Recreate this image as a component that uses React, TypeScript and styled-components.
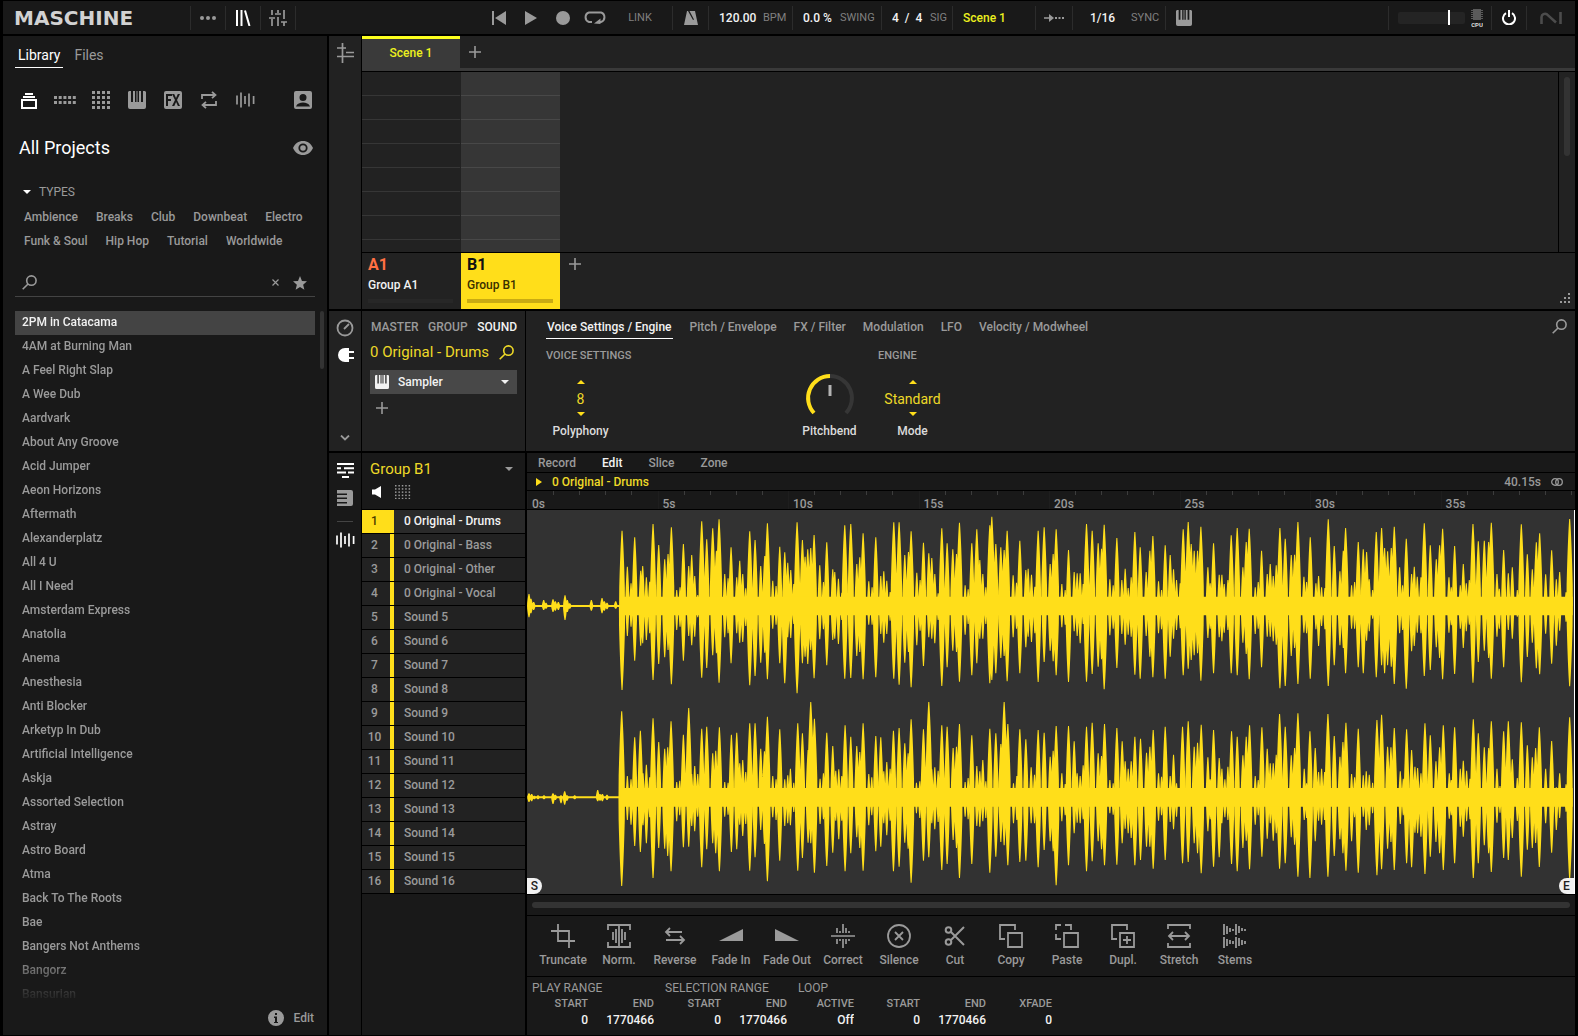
import React, { useState } from "react";
import styled, { createGlobalStyle, css } from "styled-components";

const color = {
  black: "#000",
  dark: "#191919",
  panel: "#222222",
  raised: "#3a3a3a",
  line: "#2c2c2c",
  text: "#9a9a9a",
  dim: "#747474",
  bright: "#f2f2f2",
  yellow: "#ffde1a",
  value: "#eed928",
  scene: "#ecf01e",
  orange: "#ff7043",
};

const GlobalStyle = createGlobalStyle`
  *, *::before, *::after { box-sizing: border-box; }
  html, body { margin: 0; background: ${color.black}; }
  body, button, input, select {
    font-family: Roboto, "Liberation Sans", sans-serif;
    font-size: 12px;
    font-weight: 500;
    line-height: 16px;
    color: ${color.text};
  }
  button, input, select { margin: 0; padding: 0; border: 0; background: none; border-radius: 0; outline: none; }
  button { cursor: pointer; }
  svg { display: block; flex: none; }
`;

/* ---------- frame ---------- */

const Frame = styled.div`
  display: flex;
  flex-direction: column;
  gap: 2px;
  min-height: 100vh;
  padding: 1px 3px;
  background: ${color.black};
`;

const Body = styled.div`
  display: grid;
  grid-template-columns: 324px minmax(0, 1fr);
  gap: 2px;
  flex: 1;
`;

const Workspace = styled.div`
  display: flex;
  flex-direction: column;
  gap: 2px;
  min-width: 0;
`;

const Column = styled.div<{ $gap?: number }>`
  display: flex;
  flex-direction: column;
  gap: ${(p) => p.$gap ?? 0}px;
  min-width: 0;
`;

const IconButton = styled.button<{ $w?: number; $h?: number; $on?: boolean; $bottom?: boolean }>`
  display: flex;
  align-items: center;
  justify-content: center;
  flex: none;
  width: ${(p) => p.$w ?? 36}px;
  height: ${(p) => p.$h ?? 24}px;
  margin-top: ${(p) => (p.$bottom ? "auto" : 0)};
  color: ${(p) => (p.$on ? "#fff" : color.text)};
`;

/* ---------- header ---------- */

const Header = styled.header`
  display: flex;
  justify-content: space-between;
  height: 33px;
  background: ${color.dark};
`;

const HeaderGroup = styled.div`
  display: flex;
  align-items: center;
`;

const Cell = styled.div<{ $w: number; $last?: boolean; $pad?: number }>`
  display: flex;
  align-items: center;
  justify-content: ${(p) => (p.$pad ? "flex-start" : "center")};
  gap: 6px;
  width: ${(p) => p.$w}px;
  height: 24px;
  padding-left: ${(p) => p.$pad ?? 0}px;
  border-right: ${(p) => (p.$last ? 0 : 1)}px solid ${color.line};
`;

const Logo = styled.h1`
  width: 187px;
  margin: 0;
  padding-left: 11px;
  font: 700 20px/24px "DejaVu Sans", sans-serif;
  color: #d2d2d2;
`;

const HeaderInput = styled.input<{ $w: number }>`
  width: ${(p) => p.$w}px;
  color: ${color.bright};
`;

const Unit = styled.label`
  font-size: 11px;
  font-weight: 400;
  color: #808080;
`;

const LinkButton = styled.button`
  width: 58px;
  font-size: 11px;
  font-weight: 400;
  color: #808080;
`;

const SceneButton = styled.button`
  flex: 1;
  padding-left: 10px;
  text-align: left;
  color: ${color.scene};
`;

const GridSelect = styled.select`
  appearance: none;
  width: 35px;
  color: ${color.bright};
`;

const Meter = styled.div`
  position: relative;
  width: 67px;
  height: 12px;
  margin: 0 6px 0 9px;
  background: #242424;
  border-radius: 2px;
`;

const MeterHandle = styled.span`
  position: absolute;
  top: -2px;
  left: 50px;
  width: 2px;
  height: 15px;
  background: #fff;
`;

/* ---------- library ---------- */

const Library = styled.aside`
  display: flex;
  flex-direction: column;
  background: ${color.dark};
`;

const LibraryTabs = styled.nav`
  display: flex;
  gap: 8px;
  padding: 9px 0 0 12px;
`;

const LibraryTab = styled.button<{ $on?: boolean }>`
  padding: 0 3px 2px;
  height: 23px;
  font-size: 14px;
  font-weight: 400;
  color: ${(p) => (p.$on ? "#fff" : color.text)};
  border-bottom: 1px solid ${(p) => (p.$on ? "#fff" : "transparent")};
`;

const Categories = styled.div`
  display: flex;
  padding: 20px 6px 0 8px;
`;

const Push = styled.span`
  margin-left: auto;
`;

const TitleRow = styled.div`
  display: flex;
  justify-content: space-between;
  align-items: center;
  padding: 24px 6px 0 16px;
`;

const Title = styled.h2`
  margin: 0;
  font-size: 18px;
  line-height: 24px;
  font-weight: 400;
  color: #fff;
`;

const TypesHeading = styled.button`
  display: flex;
  align-items: center;
  gap: 8px;
  margin: 24px 0 0 20px;
  font-weight: 400;
`;

const Tags = styled.div`
  display: flex;
  flex-wrap: wrap;
  gap: 8px 18px;
  padding: 9px 8px 0 21px;
`;

const SearchBar = styled.div`
  display: flex;
  align-items: center;
  height: 32px;
  margin: 16px 12px 0;
  padding: 4px 2px 0 7px;
  border-bottom: 1px solid #444;
  color: ${color.text};
`;

const SearchInput = styled.input`
  flex: 1;
  min-width: 0;
  margin-left: 8px;
`;

const Results = styled.div`
  display: flex;
  justify-content: space-between;
  flex: 1;
  padding: 14px 3px 0 12px;
`;

const ResultList = styled.ul`
  width: 300px;
  margin: 0;
  padding: 0;
  list-style: none;
  mask-image: linear-gradient(to top, transparent, transparent 4px, #000 52px);
`;

const Result = styled.button<{ $on?: boolean }>`
  display: block;
  width: 100%;
  height: 24px;
  padding: 0 0 2px 7px;
  text-align: left;
  color: ${(p) => (p.$on ? color.bright : color.text)};
  background: ${(p) => (p.$on ? "#444" : "transparent")};
`;

const ScrollThumb = styled.div<{ $w: number; $h: number }>`
  width: ${(p) => p.$w}px;
  height: ${(p) => p.$h}px;
  border-radius: 3px;
  background: #333;
`;

const LibraryFooter = styled.footer`
  display: flex;
  align-items: center;
  justify-content: flex-end;
  gap: 10px;
  padding: 0 13px 6px;
  height: 28px;
`;

/* ---------- arranger ---------- */

const Band = styled.section<{ $cols: string; $grow?: boolean }>`
  display: grid;
  grid-template-columns: ${(p) => p.$cols};
  gap: 1px;
  flex: ${(p) => (p.$grow ? 1 : "none")};
`;

const Strip = styled.div<{ $top: number; $dark?: boolean }>`
  display: flex;
  flex-direction: column;
  align-items: center;
  padding-top: ${(p) => p.$top}px;
  background: ${(p) => (p.$dark ? color.dark : color.panel)};
`;

const StripLine = styled.hr`
  width: 16px;
  margin: 7px 0 6px;
  border: 0;
  border-top: 1px solid #444;
`;

const SceneBar = styled.div`
  display: flex;
  height: 35px;
  background: ${color.panel};
`;

const SceneTab = styled.button`
  width: 98px;
  padding-bottom: 4px;
  background: ${color.raised};
  border-top: 3px solid #fdff1e;
  color: ${color.scene};
`;

const SceneRest = styled.div`
  flex: 1;
  display: flex;
  align-items: center;
  border-bottom: 3px solid ${color.raised};
`;

const ClipArea = styled.div`
  display: grid;
  grid-template-columns: 98px 99px minmax(0, 1fr) 17px;
  column-gap: 1px;
  height: 180px;
  background: ${color.panel};
`;

const ClipColumn = styled.div<{ $on?: boolean }>`
  background: repeating-linear-gradient(
    to bottom,
    transparent 0 23px,
    ${(p) => (p.$on ? "#484848" : "#363636")} 23px 24px
  ) ${(p) => (p.$on ? "#363636" : color.panel)};
`;

const ClipScroll = styled.div`
  padding: 5px 0 0 5px;
  border-left: 1px solid ${color.black};
`;

const GroupBar = styled.div`
  display: grid;
  grid-template-columns: 98px 99px minmax(0, 1fr);
  column-gap: 1px;
  height: 56px;
  background: ${color.panel};
`;

const GroupCard = styled.button<{ $on?: boolean }>`
  display: flex;
  flex-direction: column;
  align-items: stretch;
  gap: 2px;
  padding: 2px 7px 6px 6px;
  text-align: left;
  background: ${(p) => (p.$on ? color.yellow : color.panel)};
  color: ${(p) => (p.$on ? "#3a3000" : color.bright)};
`;

const GroupKey = styled.strong<{ $on?: boolean }>`
  font-size: 16px;
  line-height: 20px;
  font-weight: 700;
  color: ${(p) => (p.$on ? "#111" : color.orange)};
`;

const GroupLevel = styled.span<{ $on?: boolean }>`
  height: 4px;
  margin-top: auto;
  background: ${(p) => (p.$on ? "#c9ab12" : "#272727")};
`;

const GroupRest = styled.div`
  display: flex;
  justify-content: space-between;
  align-items: flex-start;
`;

const ResizeCorner = styled.span`
  align-self: flex-end;
  padding: 0 5px 6px 0;
`;

/* ---------- sound + plug-in ---------- */

const SoundPanel = styled.div`
  display: flex;
  flex-direction: column;
  padding: 8px 8px 0;
  background: ${color.panel};
`;

const LevelTabs = styled.div`
  display: flex;
  justify-content: space-between;
  padding-left: 1px;
`;

const PlainTab = styled.button<{ $on?: boolean }>`
  color: ${(p) => (p.$on ? color.bright : color.text)};
`;

const NameRow = styled.div`
  display: flex;
  align-items: center;
  justify-content: space-between;
  height: 20px;
  margin-top: 7px;
  padding-right: 3px;
  color: ${color.value};
`;

const BigName = styled.span`
  font-size: 15px;
  line-height: 20px;
  font-weight: 400;
  color: ${color.value};
`;

const SlotBox = styled.label`
  display: flex;
  align-items: center;
  gap: 9px;
  height: 24px;
  margin-top: 8px;
  padding: 0 8px 0 5px;
  background: #484848;
  color: ${color.bright};
`;

const SlotSelect = styled.select`
  flex: 1;
  appearance: none;
  color: ${color.bright};
`;

const PluginPanel = styled.div`
  padding: 8px 8px 0 13px;
  height: 140px;
  background: ${color.panel};
`;

const PluginTabs = styled.nav`
  display: flex;
  align-items: flex-start;
  gap: 17px;
  padding-left: 7px;
`;

const PluginTab = styled.button<{ $on?: boolean }>`
  height: 20px;
  padding: 0 0 4px;
  white-space: nowrap;
  color: ${(p) => (p.$on ? color.bright : color.text)};
  border-bottom: 1px solid ${(p) => (p.$on ? "#fff" : "transparent")};

  &:first-child { padding: 0 1px 4px; }
`;

const Params = styled.div`
  display: grid;
  grid-template-columns: repeat(5, 83px);
  padding-top: 9px;
`;

const ParamHeading = styled.h3`
  margin: 0 0 10px;
  padding-left: 7px;
  height: 16px;
  font-size: 11px;
  font-weight: 500;
  white-space: nowrap;
`;

const Param = styled.div`
  display: flex;
  flex-direction: column;
  align-items: center;
  color: ${color.value};
`;

const ParamBody = styled.div`
  display: flex;
  flex-direction: column;
  align-items: center;
  justify-content: center;
  height: 48px;
`;

const ParamValue = styled.input`
  width: 80px;
  height: 26px;
  padding-top: 2px;
  text-align: center;
  font-size: 14px;
  font-weight: 400;
  color: ${color.value};
`;

const StepButton = styled.button`
  display: flex;
  justify-content: center;
  width: 20px;
  padding: 1px 0;
  color: ${color.yellow};
`;

const ParamLabel = styled.label`
  margin-top: 1px;
  color: #dcdcdc;
`;

/* ---------- group + sounds ---------- */

const GroupHead = styled.div`
  height: 56px;
  padding: 6px 12px 0 8px;
  background: ${color.dark};
`;

const GroupSelectRow = styled.label`
  display: flex;
  align-items: center;
  height: 20px;
  color: ${color.text};
`;

const GroupSelect = styled.select`
  flex: 1;
  appearance: none;
  font-size: 15px;
  line-height: 20px;
  font-weight: 400;
  color: ${color.value};
`;

const GroupTools = styled.div`
  display: flex;
  align-items: center;
  gap: 13px;
  padding: 6px 0 0 2px;
`;

const SoundList = styled.ol`
  margin: 0;
  padding: 0;
  list-style: none;
  border-top: 1px solid ${color.black};
`;

const SoundFill = styled.div`
  flex: 1;
  background: ${color.dark};
`;

const SoundRow = styled.button<{ $on?: boolean }>`
  display: grid;
  grid-template-columns: 32px 1fr;
  width: 100%;
  height: 24px;
  border-bottom: 1px solid ${color.black};
  background: ${(p) => (p.$on ? "#2a2a2a" : color.panel)};
  color: ${(p) => (p.$on ? color.bright : color.text)};
  text-align: left;
  line-height: 23px;
`;

const SoundNumber = styled.span<{ $on?: boolean }>`
  padding-right: 3px;
  text-align: center;
  border-right: 4px solid ${color.yellow};
  ${(p) =>
    p.$on &&
    css`
      background: ${color.yellow};
      color: #4a3c00;
    `}
`;

const SoundName = styled.span`
  padding-left: 10px;
`;

/* ---------- sample editor ---------- */

const Editor = styled.div`
  display: flex;
  flex-direction: column;
  gap: 1px;
  min-width: 0;
  padding-left: 1px;
`;

const Bar = styled.div<{ $h: number }>`
  display: flex;
  align-items: center;
  height: ${(p) => p.$h}px;
  background: ${color.dark};
`;

const EditorTab = styled.button<{ $on?: boolean }>`
  margin: 0 15px 0 11px;
  color: ${(p) => (p.$on ? color.bright : color.text)};
`;

const SampleName = styled.span`
  padding-left: 10px;
  color: ${color.value};
`;

const Duration = styled.span`
  margin: 0 10px 0 auto;
`;

const Ruler = styled.div`
  display: grid;
  grid-template-columns: repeat(8, 500fr) 15fr;
  height: 18px;
  background: ${color.dark};
`;

const RulerSpan = styled.div`
  display: grid;
  grid-template-columns: repeat(5, 1fr);
`;

const Tick = styled.span<{ $major?: boolean }>`
  height: ${(p) => (p.$major ? 18 : 4)}px;
  padding: ${(p) => (p.$major ? "5px 0 0 4px" : 0)};
  border-left: 1px solid ${(p) => (p.$major ? "#1e1e1e" : "#3c3c3c")};
`;

const Wave = styled.div`
  position: relative;
  height: 384px;
  background: #323232;
  border-right: 1px solid #fff;
`;

const Marker = styled.span<{ $end?: boolean }>`
  position: absolute;
  bottom: 0;
  ${(p) => (p.$end ? "right: 0" : "left: 0")};
  width: 15px;
  height: 16px;
  text-align: center;
  color: #222;
  background: #f2f2f2;
  border-radius: ${(p) => (p.$end ? "8px 0 0 8px" : "0 8px 8px 0")};
`;

const ScrollLane = styled.div`
  flex: 1;
  height: 6px;
  margin: 0 5px;
  border-radius: 3px;
  background: #333;
`;

const ToolBar = styled.div`
  display: flex;
  height: 60px;
  padding: 8px 0 0 8px;
  background: ${color.dark};
`;

const Tool = styled.button`
  display: flex;
  flex-direction: column;
  align-items: center;
  gap: 4px;
  width: 56px;
  height: 44px;
  white-space: nowrap;
`;

const RangeBar = styled.div`
  display: flex;
  flex: 1;
  gap: 11px;
  padding: 3px 5px 6px;
  background: ${color.dark};
`;

const RangeGroup = styled.fieldset`
  margin: 0;
  padding: 0;
  border: 0;
`;

const RangeLegend = styled.legend`
  padding: 0;
  font-weight: 400;
`;

const RangeFields = styled.div`
  display: flex;
`;

const RangeField = styled.label<{ $first?: boolean }>`
  display: flex;
  flex-direction: column;
  width: ${(p) => (p.$first ? 56 : 66)}px;
  font-size: 11px;
  text-align: right;
`;

const RangeInput = styled.input`
  width: 100%;
  text-align: right;
  color: ${color.bright};
`;

/* ---------- icons ---------- */

type IconProps = { w?: number; h?: number; box?: string; children: React.ReactNode; line?: number };

const Icon = ({ w = 18, h = w, box, children, line }: IconProps) => (
  <svg
    width={w}
    height={h}
    viewBox={box ?? `0 0 ${w} ${h}`}
    fill={line ? "none" : "currentColor"}
    stroke={line ? "currentColor" : "none"}
    strokeWidth={line}
    aria-hidden="true"
  >
    {children}
  </svg>
);

const dots = (cols: number, rows: number, dx: number, dy: number, size: number) =>
  Array.from({ length: cols * rows }, (_, i) => (
    <rect key={i} x={(i % cols) * dx} y={Math.floor(i / cols) * dy} width={size} height={size} />
  ));

const Plus = () => <Icon w={12} line={1.6}><path d="M6 0v12M0 6h12" /></Icon>;
const Down = () => <Icon w={8} h={4}><path d="M0 0h8L4 4z" /></Icon>;
const Up = () => <Icon w={8} h={4}><path d="M0 4h8L4 0z" /></Icon>;
const Magnifier = ({ w = 15 }: { w?: number }) => (
  <Icon w={w} box="0 0 15 15" line={1.6}>
    <circle cx="9.4" cy="5.6" r="4.7" />
    <path d="M6 9 .7 14.3" />
  </Icon>
);
const Keys = ({ w = 18 }: { w?: number }) => (
  <Icon w={w} box="0 0 18 18">
    <path d="M1 0h2v11h2V0h2v11h1.500V0h1v11H11V0h2v11h2V0h2l1 1v15a2 2 0 0 1-2 2H2a2 2 0 0 1-2-2V1z" />
  </Icon>
);
const Bars = () => (
  <Icon w={19} h={16} line={1.7}>
    <path d="M1 3.5v9M5 .5v15M9 4v8M13 1.5v13M17.6 4v8" />
  </Icon>
);

const categoryIcons: [string, React.ReactNode][] = [
  ["Projects", <Icon w={16} h={17}><path d="M4 1h8v2H4zM2 4h12v2H2zM0 7h16v10H0zm2 2v6h12V9z" fillRule="evenodd" /></Icon>],
  ["Groups", <Icon w={22} h={8}>{dots(5, 2, 4.7, 5, 3)}</Icon>],
  ["Kits", <Icon w={18} h={18}>{dots(4, 4, 5, 5, 3)}</Icon>],
  ["Instruments", <Keys />],
  [
    "Effects",
    <Icon w={18}>
      <path
        fillRule="evenodd"
        d="M2 0h14a2 2 0 0 1 2 2v14a2 2 0 0 1-2 2H2a2 2 0 0 1-2-2V2a2 2 0 0 1 2-2zm0 3v12h2v-5h3V8H4V5h4V3zm6 0 3 6-3 6h2.300l1.800-4 1.800 4H16l-3-6 3-6h-2.200L12 7l-1.800-4z"
      />
    </Icon>,
  ],
  [
    "Loops",
    <Icon w={18} line={1.8}>
      <path d="M2 8V4h13M12 .8 15.500 4 12 7.200M16 10v4H3M6 17.200 2.500 14 6 10.800" />
    </Icon>,
  ],
  ["One-shots", <Bars />],
];

/* ---------- waveform data: x, top edge, bottom edge ---------- */

const LEFT = `28 282 352,34 296 340,42 306 330,72 300 330,79 308 326,100 298 336,107 304 332,116 306 330,136 286 360,143 300 336,150 310 326,215 300 332,247 294 340,254 304 332,262 308 328,288 304 326,
307 92 570,323 200 408,334 250 380,345 112 482,363 212 437,369 198 430,380 232 420,390 245 400,400 72 540,417 135 492,435 178 472,445 162 450,455 82 553,471 270 390,481 262 380,491 132 482,507 198 408,516 165 436,525 228 410,534 285 352,546 64 533,561 118 504,579 85 466,590 152 460,598 58 548,615 222 412,625 235 400,634 142 490,651 232 400,660 182 428,669 222 426,678 265 378,690 94 556,706 120 528,723 198 488,735 168 458,743 70 538,759 242 386,769 258 374,780 140 490,795 157 550,804 188 412,813 210 414,822 252 372,832 67 580,848 120 490,856 170 470,864 148 492,873 144 450,883 105 535,900 196 418,911 246 388,921 127 496,939 208 420,945 216 416,956 236 432,966 278 360,975 76 536,993 72 534,1011 192 468,1020 172 456,1030 100 538,1047 244 374,1057 262 374,1068 112 532,1083 228 402,1092 214 428,1101 242 402,1111 276 362,1122 67 536,1138 67 554,1155 165 488,1166 156 456,1174 94 562,1191 218 436,1201 240 392,1211 128 498,1227 160 412,1236 174 416,1245 222 430,1255 280 360,1266 85 558,1282 130 502,1299 148 452,1310 162 456,1319 68 545,1336 256 404,1345 268 372,1356 130 526,1371 88 490,1380 180 416,1389 222 416,1398 262 372,1410 76 550,1416 50 540,1428 132 520,1443 142 474,1453 150 468,1462 92 544,1480 226 412,1490 248 386,
1500 122 520,1518 210 442,1525 206 410,1535 224 426,1545 260 400,1555 92 546,1573 82 486,1591 192 452,1600 162 484,1609 88 526,1626 252 382,1636 270 374,1646 150 546,1663 216 394,1672 220 408,1681 220 430,1690 252 372,1700 72 545,1717 92 522,1735 130 500,1745 146 478,1753 74 568,1770 238 406,1780 256 386,1791 114 504,1806 240 402,1816 206 434,1825 264 404,1834 232 410,1845 96 524,1861 142 536,1879 216 408,1890 152 470,1899 108 532,1916 244 400,1925 270 388,1936 136 536,1951 165 470,1961 208 416,1970 240 390,1981 250 385,1990 88 526,2005 66 506,2014 132 480,2023 152 466,2033 152 460,2043 80 542,2064 202 414,2071 250 386,2081 130 520,2098 224 412,2106 224 424,2113 252 398,2124 240 390,2134 106 520,2152 84 526,2169 202 428,2179 126 462,2188 86 538,2206 262 402,2215 246 386,2225 152 502,2242 222 410,2251 192 410,2260 228 424,2269 196 434,2280 84 565,2296 116 558,2314 165 468,2324 164 444,2334 66 552,2352 230 398,2360 246 400,2371 112 536,2388 250 388,2396 228 438,2405 262 378,2415 264 388,2425 58 558,2443 138 496,2460 214 436,2470 152 444,2477 84 520,2495 256 386,2504 246 386,2515 126 502,2530 148 520,2540 156 422,2548 238 394,2558 270 356,2569 96 532,2585 84 496,2594 144 520,2603 154 496,2614 144 500,2623 80 552,2639 202 400,2648 256 390,2659 116 566,2675 222 454,2683 200 438,2692 230 398,2703 232 400,2713 70 528,2731 136 510,2749 178 442,2759 136 474,2768 86 538,2787 232 398,2794 262 376,2804 138 522,2821 256 386,2830 192 444,2839 250 394,2848 240 374,2859 72 548,2875 124 486,2893 122 452,2906 126 474,2914 68 536,2931 222 410,2938 266 386,2951 150 502,2965 220 390,
2977 202 416,2992 270 350,3004 73 547,3022 163 471,3037 208 428,3049 127 505,3059 100 523,3077 223 401,3095 151 491,3109 238 437,3119 216 392,3138 277 365,3149 57 559`;

const RIGHT = `28 880 906,36 882 904,44 887 898,55 886 898,73 886 898,100 880 912,107 884 900,124 886 910,135 874 914,142 886 902,165 886 898,234 870 904,241 882 902,248 882 904,262 884 900,
306 634 1158,323 828 960,334 838 974,345 712 1038,362 692 1056,370 820 976,380 794 1030,390 832 952,400 655 1134,417 726 1044,435 746 1046,444 742 1068,454 664 1114,471 846 964,480 842 946,491 704 1042,507 624 1040,516 822 978,525 798 994,534 822 950,546 686 1102,561 680 1048,579 760 1030,588 752 1060,599 682 1114,615 846 950,625 848 944,635 704 1056,651 698 1048,660 790 974,669 780 1008,678 816 972,690 670 1112,706 670 1072,723 746 990,734 754 1032,743 650 1144,759 828 952,769 838 960,780 688 1082,795 838 978,804 826 970,812 806 976,822 848 936,834 670 1112,848 700 1074,865 750 1028,873 606 1030,884 656 1118,901 836 972,911 820 958,921 698 1098,939 738 1058,948 812 962,957 808 1018,966 828 962,976 676 1114,993 710 1060,1011 738 1012,1020 756 1044,1030 670 1112,1047 822 976,1056 832 946,1068 708 1054,1083 712 1040,1092 814 970,1101 786 1006,1111 806 962,1121 692 1114,1138 684 1100,1155 730 1028,1165 760 1046,1174 658 1148,1190 848 940,1200 844 954,1211 688 1082,1227 606 1072,1236 808 970,1245 802 988,1255 812 966,1266 676 1110,1282 680 1092,1300 744 1020,1310 740 1044,1319 672 1134,1336 846 950,1345 834 958,1356 706 1092,1371 798 978,1380 814 980,1389 780 964,1398 844 954,1410 686 1118,1428 700 1070,1443 732 1026,1453 606 1036,1464 672 1096,1481 850 970,1491 828 960,
1500 688 1086,1518 718 1082,1534 802 970,1544 824 970,1555 690 1102,1573 698 1050,1591 770 1024,1600 752 1054,1609 678 1156,1626 820 964,1636 852 946,1646 678 1096,1663 724 1000,1672 820 968,1681 828 970,1690 796 958,1700 680 1114,1717 668 1084,1735 760 1024,1745 768 1048,1754 672 1096,1770 840 940,1780 850 944,1791 684 1094,1807 724 1030,1816 784 986,1825 806 1000,1834 784 1014,1845 710 1096,1862 716 1080,1880 758 1040,1890 740 1040,1900 690 1106,1916 820 962,1925 830 946,1936 680 1080,1951 828 966,1961 764 988,1970 850 950,1988 680 1090,2005 664 1086,2023 740 1030,2033 728 1060,2044 674 1120,2064 772 994,2071 838 958,2081 690 1100,2098 774 1072,2106 806 970,2115 838 952,2124 800 960,2135 694 1092,2152 710 1114,2169 766 1044,2179 710 1022,2189 676 1108,2206 828 974,2215 840 946,2226 682 1070,2242 746 1016,2251 790 970,2260 790 1022,2269 764 1000,2279 642 1106,2296 680 1090,2314 766 1012,2324 744 1034,2334 640 1130,2353 806 960,2360 850 954,2370 694 1134,2386 744 1024,2396 816 962,2405 806 974,2414 816 960,2424 642 1130,2443 708 1068,2460 770 1018,2469 726 1060,2478 668 1112,2495 822 1024,2504 832 952,2515 686 1118,2530 826 950,2539 814 990,2548 824 976,2558 848 940,2571 660 1126,2585 644 1108,2603 740 1046,2613 742 1026,2623 684 1110,2641 814 972,2650 836 946,2660 688 1090,2675 750 1102,2685 800 998,2693 804 1000,2703 820 1010,2715 670 1122,2731 706 1070,2748 784 1026,2759 742 1060,2770 676 1110,2788 820 956,2794 840 946,2804 682 1090,2821 806 980,2830 782 1010,2840 812 964,2850 836 958,2860 658 1134,2875 700 1090,2893 742 1036,2906 744 1060,2914 664 1116,2931 806 968,2940 858 938,2951 694 1074,2965 664 1080,
2977 778 1014,2992 834 963,3004 667 1130,3022 736 1049,3037 772 1044,3047 744 1029,3058 682 1101,3077 806 970,3095 723 1058,3109 862 990,3119 820 954,3138 853 935,3149 652 1138`;

const ATTACK = 302;

const spike = (x: number, base: number, tip: number) => {
  const height = Math.abs(tip - base);
  const half = (x < ATTACK ? 5 : 3.4) + height * 0.024;
  const low = base + (tip - base) * 0.25;
  const high = base + (tip - base) * 0.75;
  return `M${x - half} ${base}L${x - half * 0.95} ${low}Q${x - half * 0.6} ${high} ${x - 1.5} ${tip}h3Q${x + half * 0.6} ${high} ${x + half * 0.95} ${low}L${x + half} ${base}z`;
};

const channelPath = (data: string, axis: number, edge: 1 | 2) =>
  data
    .split(",")
    .map((item) => {
      const peak = item.trim().split(" ").map(Number);
      return spike(peak[0], axis, peak[edge]);
    })
    .join("");

const corePath = (axis: number) => `M24 ${axis - 3}h300v6H24zM${ATTACK} ${axis - 28}H3158v56H${ATTACK}z`;

const wavePaths = [
  channelPath(LEFT, 318, 1),
  channelPath(LEFT, 318, 2),
  corePath(318),
  channelPath(RIGHT, 892, 1),
  channelPath(RIGHT, 892, 2),
  corePath(892),
];

const Waveform = () => (
  <svg width="100%" height="384" viewBox="22 30 3140 1152" preserveAspectRatio="none" aria-label="Waveform">
    {wavePaths.map((d, i) => (
      <path key={i} d={d} fill={color.yellow} />
    ))}
  </svg>
);

/* ---------- content ---------- */

const projects = [
  "2PM in Catacama", "4AM at Burning Man", "A Feel Right Slap", "A Wee Dub", "Aardvark", "About Any Groove",
  "Acid Jumper", "Aeon Horizons", "Aftermath", "Alexanderplatz", "All 4 U", "All I Need", "Amsterdam Express",
  "Anatolia", "Anema", "Anesthesia", "Anti Blocker", "Arketyp In Dub", "Artificial Intelligence", "Askja",
  "Assorted Selection", "Astray", "Astro Board", "Atma", "Back To The Roots", "Bae", "Bangers Not Anthems",
  "Bangorz", "Bansurian",
];

const types = ["Ambience", "Breaks", "Club", "Downbeat", "Electro", "Funk & Soul", "Hip Hop", "Tutorial", "Worldwide"];

const sounds = [
  "0 Original - Drums", "0 Original - Bass", "0 Original - Other", "0 Original - Vocal",
  ...Array.from({ length: 12 }, (_, i) => `Sound ${i + 5}`),
];

const pluginTabs = ["Voice Settings / Engine", "Pitch / Envelope", "FX / Filter", "Modulation", "LFO", "Velocity / Modwheel"];

const tools: [string, React.ReactNode][] = [
  ["Truncate", <Icon w={24} line={1.8}><path d="M0 7h18v17M7 0v17h17" /></Icon>],
  [
    "Norm.",
    <Icon w={24} line={1.8}>
      <path d="M1 6V1h22v5M1 18v5h22v-5M6 8v8M9 5v14M12 2v20M15 5v14M18 8v8" />
    </Icon>,
  ],
  ["Reverse", <Icon w={24} line={1.8}><path d="M19 8H3M7 4 3 8l4 4M3 16h18M17 12l4 4-4 4" /></Icon>],
  ["Fade In", <Icon w={24}><path d="M0 17 24 5v12z" /></Icon>],
  ["Fade Out", <Icon w={24}><path d="M0 5v12h24z" /></Icon>],
  [
    "Correct",
    <Icon w={24} line={1.7}>
      <path d="M0 12h24M6 4v5M9 7v2M12 0v9M15 4v5M18 7v2M6 15v5M9 15v2M12 15v9M15 15v5M18 15v2" />
    </Icon>,
  ],
  ["Silence", <Icon w={24} line={1.8}><circle cx="12" cy="12" r="11" /><path d="m8 8 8 8M16 8l-8 8" /></Icon>],
  [
    "Cut",
    <Icon w={24} line={2}>
      <circle cx="5.500" cy="6" r="2.800" />
      <circle cx="5.500" cy="18" r="2.800" />
      <path d="M8 8 21 21M8 16 21 3" />
    </Icon>,
  ],
  ["Copy", <Icon w={24} line={1.8}><path d="M6 15H1V1h15v5M9 9h14v14H9z" /></Icon>],
  ["Paste", <Icon w={24} line={1.8}><path d="M1 6V1h5M10 1h6v5M1 10v5h5M9 9h14v14H9z" /></Icon>],
  ["Dupl.", <Icon w={24} line={1.8}><path d="M6 15H1V1h15v5M9 9h14v14H9zM16 12v8M12 16h8" /></Icon>],
  ["Stretch", <Icon w={24} line={1.8}><path d="M1 5V1h22v4M1 19v4h22v-4M2 12h20M6 8l-4 4 4 4M18 8l4 4-4 4" /></Icon>],
  [
    "Stems",
    <Icon w={24} line={1.8}>
      <path d="M1 0v11M4 2v8M7 4v4M10 5v2M13 0v11M16 2v7M19 4v3M22 5v2M1 13v11M4 15v7M7 16v4M10 17v3M13 13v11M16 14v8M19 16v5M22 17v3" />
    </Icon>,
  ],
];

const ranges: { name: string; fields: [string, string][] }[] = [
  { name: "PLAY RANGE", fields: [["START", "0"], ["END", "1770466"]] },
  { name: "SELECTION RANGE", fields: [["START", "0"], ["END", "1770466"]] },
  { name: "LOOP", fields: [["ACTIVE", "Off"], ["START", "0"], ["END", "1770466"], ["XFADE", "0"]] },
];

/* ---------- sections ---------- */

const TopBar = () => (
  <Header>
    <HeaderGroup>
      <Logo>MASCHINE</Logo>
      <Cell $w={1}> </Cell>
      <Cell $w={35}>
        <IconButton $w={34} aria-label="Menu">
          <Icon w={16} h={4}><circle cx="2" cy="2" r="2" /><circle cx="8" cy="2" r="2" /><circle cx="14" cy="2" r="2" /></Icon>
        </IconButton>
      </Cell>
      <Cell $w={35}>
        <IconButton $w={34} $on aria-label="Browser">
          <Icon w={16} h={16} line={2}><path d="M2 0v16M6.500 0v16M10 .5 14.500 16" /></Icon>
        </IconButton>
      </Cell>
      <Cell $w={35}>
        <IconButton $w={34} aria-label="Mixer">
          <Icon w={18} h={16} line={1.700}>
            <path d="M3 0v5M3 9v7M0 8h6M9 0v3M9 7v9M6 4h6M15 0v9M15 12v4M12 12h6" />
          </Icon>
        </IconButton>
      </Cell>
    </HeaderGroup>

    <HeaderGroup>
      <IconButton $w={32} aria-label="Restart"><Icon w={14}><path d="M0 0h2v14H0zM14 0v14L3 7z" /></Icon></IconButton>
      <IconButton $w={32} aria-label="Play"><Icon w={12} h={14}><path d="M0 0v14l12-7z" /></Icon></IconButton>
      <IconButton $w={32} aria-label="Record"><Icon w={14}><circle cx="7" cy="7" r="7" /></Icon></IconButton>
      <IconButton $w={32} aria-label="Loop">
        <Icon w={24} h={14}>
          <path d="M9 11H6a5 5 0 0 1 0-9.500h12a5 5 0 0 1 0 9.500h-3" fill="none" stroke="currentColor" strokeWidth="2" />
          <path d="m11 12.500 6.500-5V13z" />
        </Icon>
      </IconButton>
      <LinkButton>LINK</LinkButton>
      <Cell $w={4}> </Cell>
      <Cell $w={36}>
        <IconButton $w={34} aria-label="Metronome">
          <Icon w={14} h={14}><path fillRule="evenodd" d="M3 0h1l5 9 1-.600L5.500 0H11l3 14H0z" /></Icon>
        </IconButton>
      </Cell>
      <Cell $w={84} $pad={10}><HeaderInput id="bpm" $w={38} defaultValue="120.00" /><Unit htmlFor="bpm">BPM</Unit></Cell>
      <Cell $w={89} $pad={10}><HeaderInput id="swing" $w={31} defaultValue="0.0 %" /><Unit htmlFor="swing">SWING</Unit></Cell>
      <Cell $w={71} $pad={10}><HeaderInput id="sig" $w={32} defaultValue="4  /  4" /><Unit htmlFor="sig">SIG</Unit></Cell>
      <Cell $w={83}><SceneButton>Scene 1</SceneButton></Cell>
      <Cell $w={37}>
        <IconButton $w={34} aria-label="Follow">
          <Icon w={20} h={8}><path d="M0 3.200h5V0l5 4-5 4V4.800H0zM11 3h2v2h-2zM14.500 3h2v2h-2zM18 3h2v2h-2z" /></Icon>
        </IconButton>
      </Cell>
      <Cell $w={93} $pad={17}>
        <GridSelect id="grid" defaultValue="1/16"><option>1/16</option></GridSelect>
        <Unit htmlFor="grid">SYNC</Unit>
      </Cell>
      <Cell $w={35} $last><IconButton $w={34} aria-label="Keyboard"><Keys w={16} /></IconButton></Cell>
    </HeaderGroup>

    <HeaderGroup>
      <Cell $w={1}> </Cell>
      <Meter role="slider" aria-label="Volume" aria-valuenow={75}><MeterHandle /></Meter>
      <Icon w={12} h={18}>
        <path fill="#5a5a5a" d="M2 0h8v11H2zM0 1h12v1H0zM0 3h12v1H0zM0 5h12v1H0zM0 7h12v1H0zM0 9h12v1H0z" />
        <text x="6" y="18" textAnchor="middle" fontSize="6" fontWeight="700" fill="#ddd">CPU</text>
      </Icon>
      <Cell $w={9}> </Cell>
      <Cell $w={35}>
        <IconButton $w={34} $on aria-label="Audio engine">
          <Icon w={14} h={15} line={2}><path d="M4 3.200a6 6 0 1 0 6 0M7 0v7" /></Icon>
        </IconButton>
      </Cell>
      <Cell $w={48} $last>
        <Icon w={22} h={12} line={2.600}><path stroke="#4c4c4c" d="M1.500 12V5a3.500 3.500 0 0 1 5.500-2.600L16 10.500M20.500 0v12" /></Icon>
      </Cell>
    </HeaderGroup>
  </Header>
);

const Browser = () => {
  const [selected, setSelected] = useState(0);
  return (
    <Library>
      <LibraryTabs>
        <LibraryTab $on>Library</LibraryTab>
        <LibraryTab>Files</LibraryTab>
      </LibraryTabs>
      <Categories>
        {categoryIcons.map(([name, icon], i) => (
          <IconButton key={name} $on={i === 0} aria-label={name}>{icon}</IconButton>
        ))}
        <Push />
        <IconButton aria-label="User content">
          <Icon w={18}>
            <path fillRule="evenodd" d="M2 0h14a2 2 0 0 1 2 2v14a2 2 0 0 1-2 2H2a2 2 0 0 1-2-2V2a2 2 0 0 1 2-2zm7 3a3.500 3.500 0 1 0 0 7 3.500 3.500 0 0 0 0-7zM2 15.500h14c-1-3-4-4-7-4s-6 1-7 4z" />
          </Icon>
        </IconButton>
      </Categories>
      <TitleRow>
        <Title>All Projects</Title>
        <IconButton aria-label="Preview">
          <Icon w={20} h={14}>
            <path fillRule="evenodd" d="M10 0c4.500 0 8 2.500 10 7-2 4.500-5.500 7-10 7S2 11.500 0 7c2-4.500 5.500-7 10-7zm0 2.400a4.600 4.600 0 1 0 0 9.200 4.600 4.600 0 0 0 0-9.200zm0 1.800a2.800 2.800 0 1 1 0 5.600 2.800 2.800 0 0 1 0-5.600z" />
          </Icon>
        </IconButton>
      </TitleRow>
      <div>
        <TypesHeading><Icon w={8} h={4}><path fill="#fff" d="M0 0h8L4 4z" /></Icon>TYPES</TypesHeading>
      </div>
      <Tags>{types.map((t) => <PlainTab key={t}>{t}</PlainTab>)}</Tags>
      <SearchBar>
        <Magnifier />
        <SearchInput aria-label="Search" />
        <IconButton $w={24} aria-label="Clear"><Icon w={7} line={1.200}><path d="m.5.5 6 6M6.500.5l-6 6" /></Icon></IconButton>
        <IconButton $w={26} aria-label="Favorites">
          <Icon w={14} h={14} box="0 0 24 24"><path d="m12 0 3.400 8.500 8.600.6-6.600 5.800 2.100 8.700L12 18.800l-7.500 4.800 2.100-8.700L0 9.100l8.600-.6z" /></Icon>
        </IconButton>
      </SearchBar>
      <Results>
        <ResultList>
          {projects.map((p, i) => (
            <li key={p}><Result $on={i === selected} onClick={() => setSelected(i)}>{p}</Result></li>
          ))}
        </ResultList>
        <ScrollThumb $w={4} $h={58} />
      </Results>
      <LibraryFooter>
        <Icon w={16}><path fillRule="evenodd" d="M8 0a8 8 0 1 1 0 16A8 8 0 0 1 8 0zM7 3v2h2V3zM6 6.500V8h1v4H6v1h4v-1H9V6.500z" /></Icon>
        <button>Edit</button>
      </LibraryFooter>
    </Library>
  );
};

const Arranger = () => (
  <Band $cols="32px minmax(0, 1fr)">
    <Strip $top={5}>
      <IconButton $w={32} aria-label="Ideas view">
        <Icon w={17} h={20} line={1.700}><path d="M5.500 0v20M0 5h9M9 9.500h8M0 13.500h17" /></Icon>
      </IconButton>
    </Strip>
    <Column $gap={1}>
      <SceneBar>
        <SceneTab>Scene 1</SceneTab>
        <SceneRest><IconButton $w={30} aria-label="Add scene"><Plus /></IconButton></SceneRest>
      </SceneBar>
      <ClipArea>
        <ClipColumn />
        <ClipColumn $on />
        <span />
        <ClipScroll><ScrollThumb $w={6} $h={79} /></ClipScroll>
      </ClipArea>
      <GroupBar>
        <GroupCard><GroupKey>A1</GroupKey>Group A1<GroupLevel /></GroupCard>
        <GroupCard $on><GroupKey $on>B1</GroupKey>Group B1<GroupLevel $on /></GroupCard>
        <GroupRest>
          <IconButton $w={28} $h={22} aria-label="Add group"><Plus /></IconButton>
          <ResizeCorner>
            <Icon w={10} h={10}><path d="M8 0h2v2H8zM4 4h2v2H4zM8 4h2v2H8zM0 8h2v2H0zM4 8h2v2H4zM8 8h2v2H8z" /></Icon>
          </ResizeCorner>
        </GroupRest>
      </GroupBar>
    </Column>
  </Band>
);

const Knob = () => (
  <svg width="50" height="50" viewBox="0 1 50 50" fill="none" role="img" aria-label="Pitchbend knob">
    <path d="M25 4a22 22 0 0 1 16 37" stroke="#363636" strokeWidth="4" />
    <path d="M9 41A22 22 0 0 1 25 4" stroke={color.yellow} strokeWidth="4" />
    <path d="M25 13v11" stroke="#b4b4b4" strokeWidth="3" />
  </svg>
);

const Stepper = ({ label, value }: { label: string; value: string }) => (
  <Param>
    <ParamBody>
      <StepButton aria-label={`${label} up`}><Up /></StepButton>
      <ParamValue id={label} defaultValue={value} />
      <StepButton aria-label={`${label} down`}><Down /></StepButton>
    </ParamBody>
    <ParamLabel htmlFor={label}>{label}</ParamLabel>
  </Param>
);

const PluginArea = () => (
  <Band $cols="32px 163px minmax(0, 1fr)">
    <Strip $top={5}>
      <IconButton $w={32} aria-label="Channel">
        <Icon w={18} line={1.800}><circle cx="9" cy="9" r="7.500" /><path d="m8 10 5-5" /></Icon>
      </IconButton>
      <IconButton $w={32} $h={30} $on aria-label="Plug-in">
        <Icon w={17} h={16}><path d="M8 1h4v3h5v2h-5v4h5v2h-5v3H8A7 7 0 0 1 8 1z" /></Icon>
      </IconButton>
      <IconButton $w={32} $h={26} $bottom aria-label="Collapse">
        <Icon w={10} h={6} line={1.800}><path d="m1 .5 4 4 4-4" /></Icon>
      </IconButton>
    </Strip>
    <SoundPanel>
      <LevelTabs><PlainTab>MASTER</PlainTab><PlainTab>GROUP</PlainTab><PlainTab $on>SOUND</PlainTab></LevelTabs>
      <NameRow><BigName>0 Original - Drums</BigName><Magnifier /></NameRow>
      <SlotBox>
        <Keys w={14} />
        <SlotSelect defaultValue="Sampler" aria-label="Plug-in slot"><option>Sampler</option></SlotSelect>
        <Down />
      </SlotBox>
      <IconButton $w={24} $h={28} aria-label="Add plug-in"><Plus /></IconButton>
    </SoundPanel>
    <PluginPanel>
      <PluginTabs>
        {pluginTabs.map((t, i) => <PluginTab key={t} $on={i === 0}>{t}</PluginTab>)}
        <Push><Magnifier /></Push>
      </PluginTabs>
      <Params>
        <div><ParamHeading>VOICE SETTINGS</ParamHeading><Stepper label="Polyphony" value="8" /></div>
        <span />
        <span />
        <div>
          <ParamHeading />
          <Param><ParamBody><Knob /></ParamBody><ParamLabel as="span">Pitchbend</ParamLabel></Param>
        </div>
        <div><ParamHeading>ENGINE</ParamHeading><Stepper label="Mode" value="Standard" /></div>
      </Params>
    </PluginPanel>
  </Band>
);

const SampleEditor = () => (
  <Editor>
    <Bar $h={19}>
      {["Record", "Edit", "Slice", "Zone"].map((t) => <EditorTab key={t} $on={t === "Edit"}>{t}</EditorTab>)}
    </Bar>
    <Bar $h={17}>
      <IconButton $w={15} $h={16} aria-label="Preview sample">
        <Push /><Icon w={6} h={8}><path fill={color.yellow} d="M0 0v8l6-4z" /></Icon>
      </IconButton>
      <SampleName>0 Original - Drums</SampleName>
      <Duration>40.15s</Duration>
      <Icon w={12} h={8} line={1.300}><circle cx="4" cy="4" r="3.300" /><circle cx="8" cy="4" r="3.300" /></Icon>
      <Cell $w={12} $last> </Cell>
    </Bar>
    <Ruler>
      {Array.from({ length: 8 }, (_, i) => (
        <RulerSpan key={i}>
          <Tick $major>{i * 5}s</Tick>
          <Tick /><Tick /><Tick /><Tick />
        </RulerSpan>
      ))}
      <Tick />
    </Ruler>
    <Wave><Waveform /><Marker>S</Marker><Marker $end>E</Marker></Wave>
    <Bar $h={20}><ScrollLane /></Bar>
    <ToolBar>
      {tools.map(([name, icon]) => <Tool key={name}>{icon}{name}</Tool>)}
    </ToolBar>
    <RangeBar>
      {ranges.map((r) => (
        <RangeGroup key={r.name}>
          <RangeLegend>{r.name}</RangeLegend>
          <RangeFields>
            {r.fields.map(([name, value], i) => (
              <RangeField key={name} $first={i === 0}>{name}<RangeInput defaultValue={value} /></RangeField>
            ))}
          </RangeFields>
        </RangeGroup>
      ))}
    </RangeBar>
  </Editor>
);

const PatternArea = () => {
  const [selected, setSelected] = useState(0);
  return (
    <Band $cols="32px 163px minmax(0, 1fr)" $grow>
      <Strip $top={5} $dark>
        <IconButton $w={32} $on aria-label="Pattern editor">
          <Icon w={17} h={15}><path d="M0 0h17v2H0zM0 4.300h4v2H0zM7 4.300h10v2H7zM0 8.600h9v2H0zM11 8.600h6v2h-6zM5 12.900h7v2H5z" /></Icon>
        </IconButton>
        <IconButton $w={32} $h={32} aria-label="Piano roll">
          <Icon w={16}><path d="M0 0h14a2 2 0 0 1 2 2v12a2 2 0 0 1-2 2H0v-2.500h10V12H0V9h10V7.500H0V5h10V3.500H0z" /></Icon>
        </IconButton>
        <StripLine />
        <IconButton $w={32} $on aria-label="Sample editor"><Bars /></IconButton>
      </Strip>
      <Column>
        <GroupHead>
          <GroupSelectRow>
            <GroupSelect defaultValue="Group B1" aria-label="Group"><option>Group B1</option></GroupSelect>
            <Down />
          </GroupSelectRow>
          <GroupTools>
            <Icon w={10} h={12}><path fill="#fff" d="M0 3.500h3L9 0v12L3 8.500H0z" /></Icon>
            <Icon w={16} h={14}>{dots(5, 5, 3.400, 3.200, 1.500)}</Icon>
          </GroupTools>
        </GroupHead>
        <SoundList>
          {sounds.map((s, i) => (
            <li key={s}>
              <SoundRow $on={i === selected} onClick={() => setSelected(i)}>
                <SoundNumber $on={i === selected}>{i + 1}</SoundNumber>
                <SoundName>{s}</SoundName>
              </SoundRow>
            </li>
          ))}
        </SoundList>
        <SoundFill />
      </Column>
      <SampleEditor />
    </Band>
  );
};

export default function App() {
  return (
    <>
      <GlobalStyle />
      <Frame>
        <TopBar />
        <Body>
          <Browser />
          <Workspace>
            <Arranger />
            <PluginArea />
            <PatternArea />
          </Workspace>
        </Body>
      </Frame>
    </>
  );
}
